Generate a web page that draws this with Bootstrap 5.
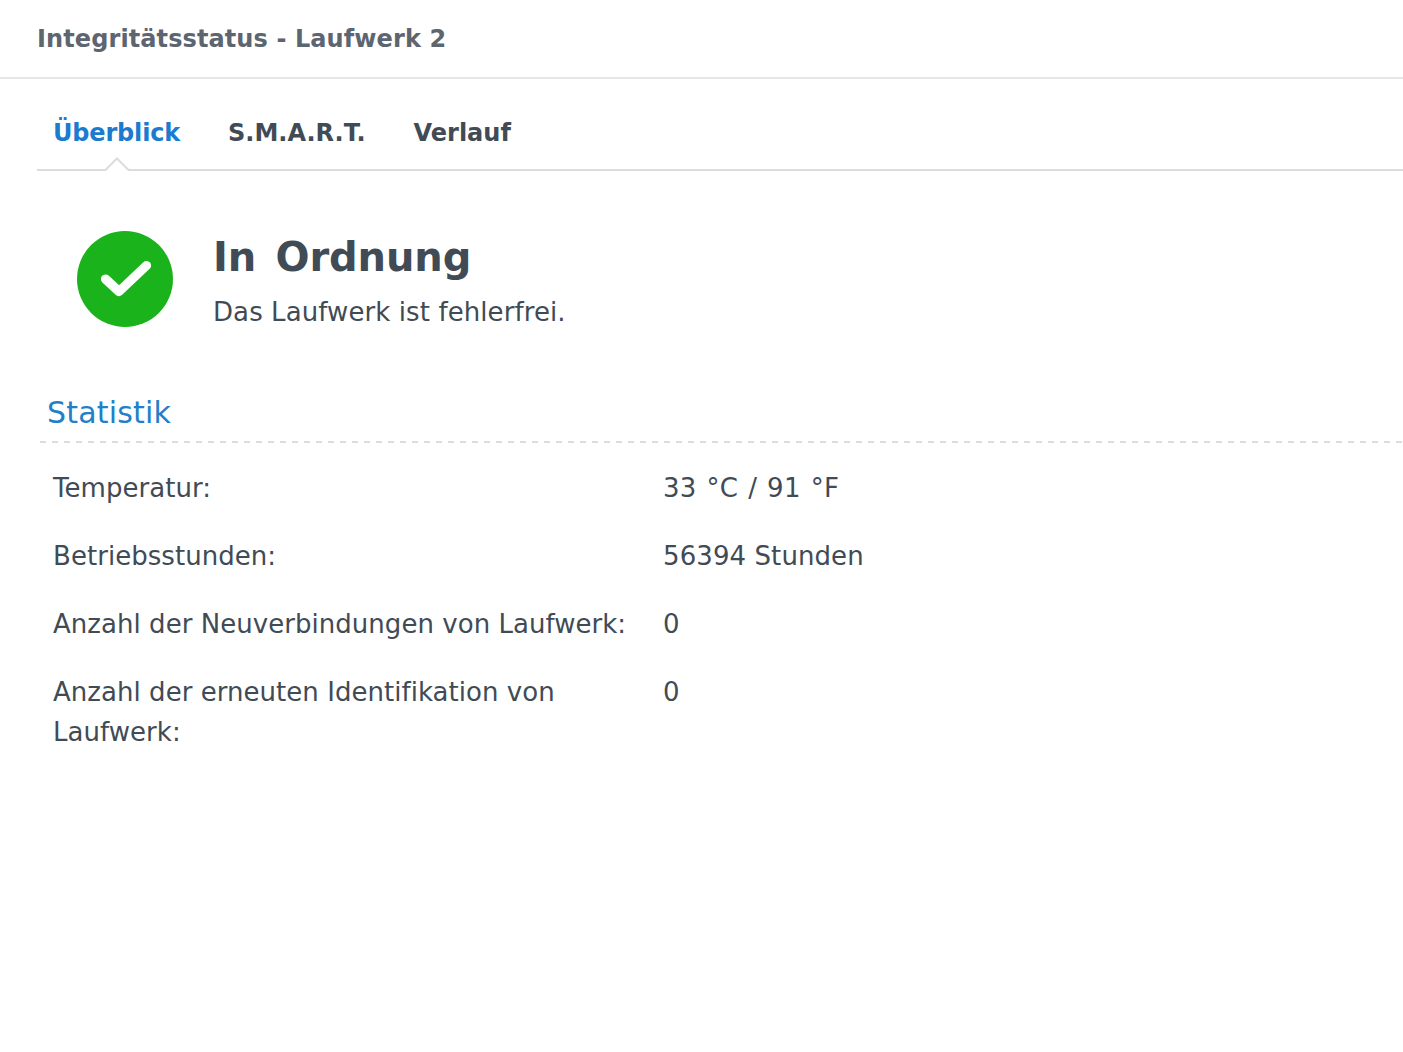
<!DOCTYPE html>
<html lang="de">
<head>
<meta charset="utf-8">
<meta name="viewport" content="width=device-width, initial-scale=1">
<title>Integritätsstatus - Laufwerk 2</title>
<link href="https://cdn.jsdelivr.net/npm/bootstrap@5.3.0/dist/css/bootstrap.min.css" rel="stylesheet">
<style>
body{font-family:"DejaVu Sans",Verdana,sans-serif;color:#414b55;font-size:26px;line-height:40px;letter-spacing:.09px}
.head{height:79px;padding-left:37px;border-bottom:2px solid #e6e6e6;font-size:24px;line-height:40px;color:#5c6570;letter-spacing:.1px}
.tabs{margin-left:37px;height:92px;border-bottom:2px solid #dcdcdc;font-size:24px;padding:34px 0 0 16px;gap:48px;letter-spacing:0}
.tabs .nav-link{padding:0;color:#414b55;line-height:40px;height:40px}
.tabs .nav-link.active{color:#1c7bcf;letter-spacing:-.17px}
.notch{left:67px;top:77px}
.status-area{padding:60px 0 0 77px;gap:40px;height:156px}
.status-title{font-size:40px;line-height:52px;letter-spacing:-.1px;word-spacing:5.500px;margin-bottom:9px}
.stat-head{margin:66px 0 0 40px;padding:0 0 10px 7px;font-size:30px;line-height:40px;color:#2380c8;letter-spacing:.2px;
background:repeating-linear-gradient(90deg,#dcdcdc 0 6px,transparent 6px 12px) left bottom/100% 2px no-repeat}
.stats{padding:25px 0 0 53px}
.stats .stat-row{margin-bottom:28px}
.stats dt{width:610px;padding-right:30px;letter-spacing:.04px}
.degrees{letter-spacing:.3px;word-spacing:1.300px}
</style>
</head>
<body class="bg-white">
<header class="head d-flex align-items-center fw-bold">Integritätsstatus - Laufwerk 2</header>
<nav class="tabs nav position-relative fw-bold">
<a class="nav-link active" href="#">Überblick</a>
<a class="nav-link" href="#">S.M.A.R.T.</a>
<a class="nav-link" href="#">Verlauf</a>
<svg class="notch position-absolute" width="26" height="15" viewBox="0 0 26 15" aria-hidden="true"><path d="M2 13h22v2H2z" fill="#fff"/><path d="M0 14h1.5L13 2.5 24.500 14H26" fill="none" stroke="#dcdcdc" stroke-width="2"/></svg>
</nav>
<main>
<section class="status-area d-flex">
<svg class="flex-shrink-0" width="96" height="96" viewBox="0 0 96 96" aria-hidden="true"><circle cx="48" cy="48" r="48" fill="#1bb31b"/><path d="M28.500 48L42 60.500 69.500 34.500" fill="none" stroke="#fff" stroke-width="9.200" stroke-linecap="round" stroke-linejoin="round"/></svg>
<div><h1 class="status-title fw-bold">In Ordnung</h1><p class="mb-0">Das Laufwerk ist fehlerfrei.</p></div>
</section>
<h2 class="stat-head fw-normal">Statistik</h2>
<dl class="stats mb-0">
<div class="stat-row d-flex"><dt class="fw-normal">Temperatur:</dt><dd class="degrees mb-0">33 °C / 91 °F</dd></div>
<div class="stat-row d-flex"><dt class="fw-normal">Betriebsstunden:</dt><dd class="mb-0">56394 Stunden</dd></div>
<div class="stat-row d-flex"><dt class="fw-normal">Anzahl der Neuverbindungen von Laufwerk:</dt><dd class="mb-0">0</dd></div>
<div class="stat-row d-flex"><dt class="fw-normal">Anzahl der erneuten Identifikation von Laufwerk:</dt><dd class="mb-0">0</dd></div>
</dl>
</main>
<script src="https://cdn.jsdelivr.net/npm/bootstrap@5.3.0/dist/js/bootstrap.bundle.min.js"></script>
</body>
</html>
